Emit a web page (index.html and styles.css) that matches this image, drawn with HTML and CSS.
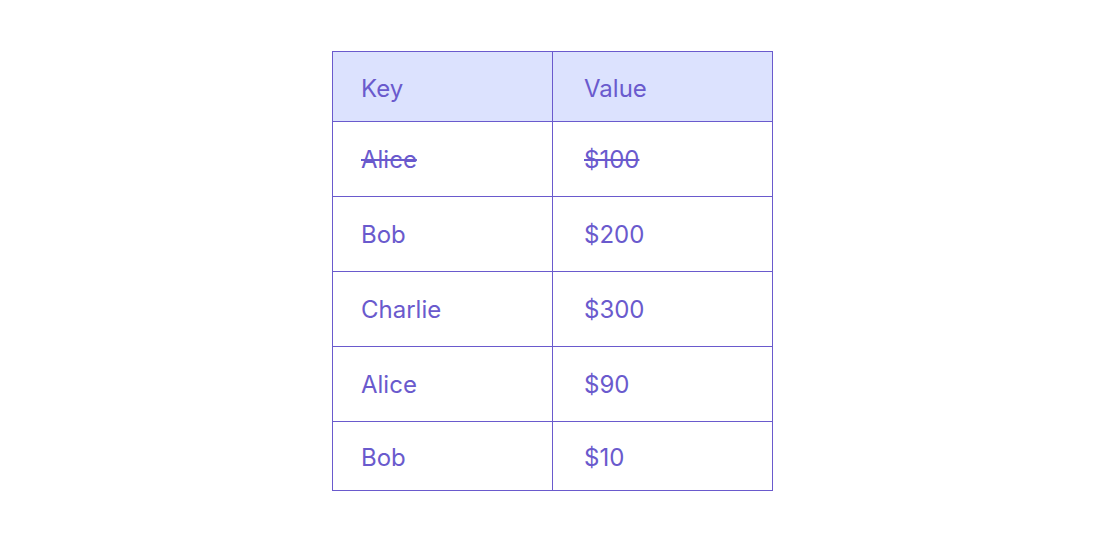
FILE: index.html
```html
<!DOCTYPE html>
<html>
<head>
<meta charset="utf-8">
<link rel="stylesheet" href="styles.css">
</head>
<body>
<main class="page">
  <table class="ledger">
    <colgroup><col class="col-key"><col class="col-value"></colgroup>
    <thead>
      <tr class="head-row"><th>Key</th><th>Value</th></tr>
    </thead>
    <tbody>
      <tr class="row"><td class="struck">Alice</td><td class="struck">$100</td></tr>
      <tr class="row"><td>Bob</td><td>$200</td></tr>
      <tr class="row"><td>Charlie</td><td>$300</td></tr>
      <tr class="row"><td>Alice</td><td>$90</td></tr>
      <tr class="row last"><td>Bob</td><td>$10</td></tr>
    </tbody>
  </table>
</main>
</body>
</html>
```
FILE: styles.css
```css
html, body {
  margin: 0;
  padding: 0;
  background: #ffffff;
}
.page {
  height: 541px;
  display: flex;
  align-items: center;
  justify-content: center;
}
.ledger {
  width: 441px;
  border-collapse: collapse;
  font-family: Inter, "Liberation Sans", sans-serif;
  font-size: 24px;
  color: #6a5acd;
  table-layout: fixed;
}
.col-key {
  width: 220px;
}
.ledger th, .ledger td {
  border: 1px solid #6a5acd;
  text-align: left;
  font-weight: 400;
  padding: 0 0 0 28px;
}
.ledger th + th, .ledger td + td {
  padding-left: 31px;
}
.head-row {
  background: #dce2fe;
  height: 70px;
}
.head-row th {
  padding-top: 4px;
}
.row {
  height: 75px;
}
.row td {
  padding-top: 2px;
}
.row.last {
  height: 69px;
}
.row.last td {
  padding-top: 4px;
}
.struck {
  text-decoration: line-through;
}
```
